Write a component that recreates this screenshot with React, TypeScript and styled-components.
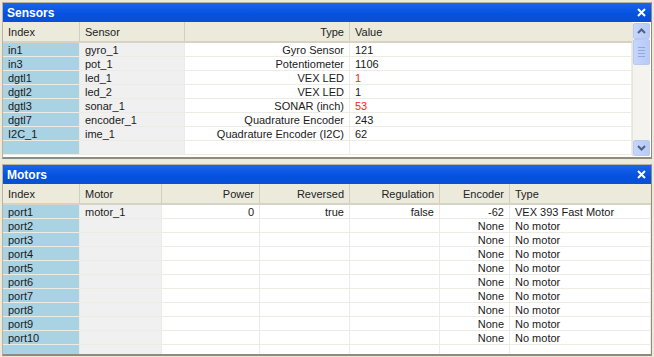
import React from 'react';
import styled, { createGlobalStyle } from 'styled-components';

const GlobalStyle = createGlobalStyle`
  html, body {
    margin: 0;
    padding: 0;
    background: #ece9d8;
    font-family: "Liberation Sans", Arial, sans-serif;
    font-size: 11px;
    color: #111;
  }
  #root {
    height: 357px;
    overflow: hidden;
  }
`;

const Page = styled.div`
  display: flex;
  flex-direction: column;
  gap: 5px;
  padding: 2px 2px 0 2px;
  height: 357px;
  box-sizing: border-box;
`;

const Panel = styled.div<{ $height: number }>`
  display: flex;
  flex-direction: column;
  height: ${p => p.$height}px;
  flex: none;
  border: 1px solid #b8b4a2;
  border-right-color: #8f8c7e;
  border-bottom: 2px solid #8f8c7e;
  background: #fff;
  overflow: hidden;
  box-sizing: border-box;
`;

const TitleBar = styled.div`
  flex: none;
  height: 19px;
  display: flex;
  align-items: center;
  justify-content: space-between;
  padding: 0 5px 0 4px;
  background: linear-gradient(#1c64ec, #0451de 60%, #0a4fd6);
  color: #fff;
  font-family: "Liberation Sans", Tahoma, sans-serif;
  font-weight: bold;
  font-size: 12px;
`;

const Body = styled.div`
  flex: 1;
  display: flex;
  min-height: 0;
`;

const Table = styled.div`
  flex: 1;
  min-width: 0;
  display: flex;
  flex-direction: column;
`;

const Row = styled.div<{ $cols: string }>`
  display: grid;
  grid-template-columns: ${p => p.$cols};
  height: 14px;
  flex: none;
`;

const HeaderRow = styled(Row)`
  height: 19px;
  background: #ebeadb;
  border-bottom: 2px solid #d7d3c4;
`;

const HeadCell = styled.div<{ $right?: boolean }>`
  display: flex;
  align-items: center;
  justify-content: ${p => (p.$right ? 'flex-end' : 'flex-start')};
  padding: 1px 5px 0;
  border-right: 1px solid #d2cfc0;
  color: #222;
  white-space: nowrap;
  overflow: hidden;
  &:last-child {
    border-right: none;
  }
`;

const Cell = styled.div<{ $right?: boolean; $bg?: string; $red?: boolean }>`
  display: flex;
  align-items: center;
  justify-content: ${p => (p.$right ? 'flex-end' : 'flex-start')};
  padding: 1px 5px 0;
  background: ${p => p.$bg || '#fff'};
  color: ${p => (p.$red ? '#ff1a1a' : '#1a1a1a')};
  border-right: 1px solid #ecebe4;
  border-bottom: 1px solid #ecebe4;
  white-space: nowrap;
  overflow: hidden;
  line-height: 12px;
`;

const Scrollbar = styled.div`
  flex: none;
  width: 17px;
  margin: 1px 1px 1px 0;
  display: flex;
  flex-direction: column;
  background: #f4f3ee;
  border-left: 1px solid #e8e6dc;
`;

const ScrollButton = styled.div`
  height: 16px;
  display: flex;
  align-items: center;
  justify-content: center;
  border: 1px solid #b9c9ef;
  border-radius: 2px;
  background: linear-gradient(90deg, #c6d6fc, #b6cbf5);
  box-sizing: border-box;
`;

const Thumb = styled(ScrollButton)`
  height: 26px;
  flex-direction: column;
  gap: 2px;
  span {
    display: block;
    width: 7px;
    height: 1px;
    background: #8fa6e0;
  }
`;

const Track = styled.div`
  flex: 1;
`;

const Arrow = ({ down }: { down?: boolean }) => (
  <svg width="9" height="6" viewBox="0 0 9 6">
    <path
      d={down ? 'M1 1 L4.5 4.5 L8 1' : 'M1 5 L4.5 1.5 L8 5'}
      fill="none"
      stroke="#4d6185"
      strokeWidth="2"
    />
  </svg>
);

const CloseIcon = () => (
  <svg width="9" height="9" viewBox="0 0 9 9">
    <path d="M1 1 L8 8 M8 1 L1 8" stroke="#fff" strokeWidth="2" />
  </svg>
);

const INDEX_BG = '#a9d2e3';
const NAME_BG = '#f0f0f0';

const sensorCols = '77px 105px 165px 1fr';
const motorCols = '77px 82px 98px 90px 90px 70px 1fr';

const sensors = [
  { index: 'in1', name: 'gyro_1', type: 'Gyro Sensor', value: '121' },
  { index: 'in3', name: 'pot_1', type: 'Potentiometer', value: '1106' },
  { index: 'dgtl1', name: 'led_1', type: 'VEX LED', value: '1', red: true },
  { index: 'dgtl2', name: 'led_2', type: 'VEX LED', value: '1' },
  { index: 'dgtl3', name: 'sonar_1', type: 'SONAR (inch)', value: '53', red: true },
  { index: 'dgtl7', name: 'encoder_1', type: 'Quadrature Encoder', value: '243' },
  { index: 'I2C_1', name: 'ime_1', type: 'Quadrature Encoder (I2C)', value: '62' },
  { index: '', name: '', type: '', value: '' },
];

const motors = [
  { index: 'port1', name: 'motor_1', power: '0', rev: 'true', reg: 'false', enc: '-62', type: 'VEX 393 Fast Motor' },
  ...Array.from({ length: 9 }, (_, i) => ({
    index: `port${i + 2}`,
    name: '',
    power: '',
    rev: '',
    reg: '',
    enc: 'None',
    type: 'No motor',
  })),
  { index: '', name: '', power: '', rev: '', reg: '', enc: '', type: '' },
];

const App: React.FC = () => (
  <>
    <GlobalStyle />
    <Page>
      <Panel $height={157}>
        <TitleBar>
          Sensors
          <CloseIcon />
        </TitleBar>
        <Body>
          <Table>
            <HeaderRow $cols={sensorCols}>
              <HeadCell>Index</HeadCell>
              <HeadCell>Sensor</HeadCell>
              <HeadCell $right>Type</HeadCell>
              <HeadCell>Value</HeadCell>
            </HeaderRow>
            {sensors.map((s, i) => (
              <Row key={i} $cols={sensorCols}>
                <Cell $bg={INDEX_BG}>{s.index}</Cell>
                <Cell $bg={NAME_BG}>{s.name}</Cell>
                <Cell $right>{s.type}</Cell>
                <Cell $red={s.red}>{s.value}</Cell>
              </Row>
            ))}
          </Table>
          <Scrollbar>
            <ScrollButton>
              <Arrow />
            </ScrollButton>
            <Thumb>
              <span />
              <span />
              <span />
              <span />
            </Thumb>
            <Track />
            <ScrollButton>
              <Arrow down />
            </ScrollButton>
          </Scrollbar>
        </Body>
      </Panel>
      <Panel $height={192}>
        <TitleBar>
          Motors
          <CloseIcon />
        </TitleBar>
        <Body>
          <Table>
            <HeaderRow $cols={motorCols}>
              <HeadCell>Index</HeadCell>
              <HeadCell>Motor</HeadCell>
              <HeadCell $right>Power</HeadCell>
              <HeadCell $right>Reversed</HeadCell>
              <HeadCell $right>Regulation</HeadCell>
              <HeadCell $right>Encoder</HeadCell>
              <HeadCell>Type</HeadCell>
            </HeaderRow>
            {motors.map((m, i) => (
              <Row key={i} $cols={motorCols}>
                <Cell $bg={INDEX_BG}>{m.index}</Cell>
                <Cell $bg={NAME_BG}>{m.name}</Cell>
                <Cell $right>{m.power}</Cell>
                <Cell $right>{m.rev}</Cell>
                <Cell $right>{m.reg}</Cell>
                <Cell $right>{m.enc}</Cell>
                <Cell>{m.type}</Cell>
              </Row>
            ))}
          </Table>
        </Body>
      </Panel>
    </Page>
  </>
);

export default App;
